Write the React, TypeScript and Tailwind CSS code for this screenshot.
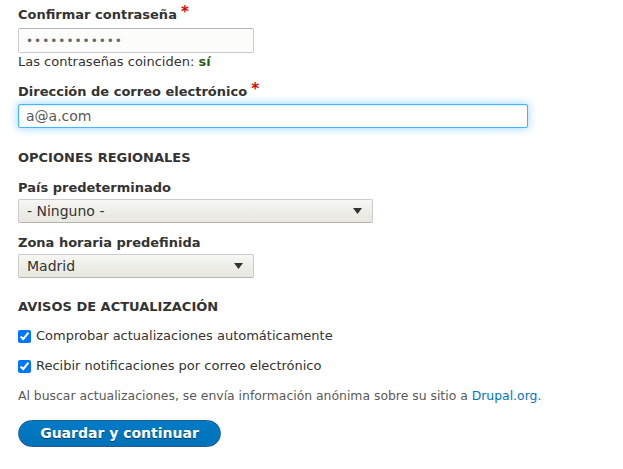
import React from "react";

const Star = () => (
  <span className="ml-[4px] relative top-[-3px] text-[#e00000] font-bold text-[15px]">*</span>
);

const Arrow = () => (
  <svg width="9" height="6" viewBox="0 0 9 6" className="shrink-0">
    <path d="M0 0 H9 L4.5 6 Z" fill="#333" />
  </svg>
);

const Select = ({ value, width }: { value: string; width: string }) => (
  <div
    className={`${width} h-[24px] flex items-center justify-between pl-[8px] pr-[10px] rounded-[2px] border border-[#cccccc] border-b-[#b4b4b4] bg-gradient-to-b from-[#f6f6f3] to-[#e7e7df] text-[14px] text-[#333]`}
  >
    <span>{value}</span>
    <Arrow />
  </div>
);

export default function App() {
  return (
    <div
      className="bg-white w-[623px] h-[469px] overflow-hidden pl-[18px] pt-[5px] text-[#333]"
      style={{ fontFamily: '"DejaVu Sans", Verdana, sans-serif' }}
    >
      <div className="leading-[20px] text-[13px] font-bold text-[#333] flex items-center">
        Confirmar contraseña
        <Star />
      </div>
      <input
        type="password"
        readOnly
        value="123456789012"
        className="mt-[3px] block w-[236px] h-[25px] px-[7px] rounded-[2px] border border-[#cccccc] border-t-[#b4b4b4] bg-[#fcfcfa] text-[12px] tracking-[1px] text-[#666] outline-none"
      />
      <div className="leading-[18px] text-[13px] text-[#333]">
        Las contraseñas coinciden: <span className="font-bold text-[#325e1c]">sí</span>
      </div>

      <div className="mt-[11px] leading-[20px] text-[13px] font-bold text-[#333] flex items-center">
        Dirección de correo electrónico
        <Star />
      </div>
      <div className="mt-[2px] w-[510px] h-[24px] flex items-center px-[7px] rounded-[2px] border border-[#40b6ff] bg-white text-[14px] text-[#595959] shadow-[inset_0_1px_2px_rgba(0,0,0,0.1),0_0_9px_1px_#a6dbff]">
        a@a.com
      </div>

      <div className="mt-[20px] leading-[20px] text-[13px] font-bold uppercase text-[#333]">
        Opciones regionales
      </div>

      <div className="mt-[10px] leading-[20px] text-[13px] font-bold text-[#333]">
        País predeterminado
      </div>
      <div className="mt-[1px]">
        <Select value="- Ninguno -" width="w-[355px]" />
      </div>

      <div className="mt-[10px] leading-[20px] text-[13px] font-bold text-[#333]">
        Zona horaria predefinida
      </div>
      <div className="mt-[1px]">
        <Select value="Madrid" width="w-[236px]" />
      </div>

      <div className="mt-[19px] leading-[20px] text-[13px] font-bold uppercase text-[#333]">
        Avisos de actualización
      </div>

      <label className="mt-[9px] flex items-center leading-[20px] text-[13px] text-[#333]">
        <input type="checkbox" defaultChecked className="m-0 mr-[5px] w-[13px] h-[13px] accent-[#0075ff]" />
        Comprobar actualizaciones automáticamente
      </label>
      <label className="mt-[10px] flex items-center leading-[20px] text-[13px] text-[#333]">
        <input type="checkbox" defaultChecked className="m-0 mr-[5px] w-[13px] h-[13px] accent-[#0075ff]" />
        Recibir notificaciones por correo electrónico
      </label>

      <div className="mt-[10px] leading-[20px] text-[12.4px] text-[#595959]">
        Al buscar actualizaciones, se envía información anónima sobre su sitio a{" "}
        <span className="text-[#0074bd]">Drupal.org</span>.
      </div>

      <button className="mt-[14px] w-[203px] h-[27px] rounded-full border border-[#1e5c90] bg-gradient-to-b from-[#007bc6] to-[#0071b8] text-white font-bold text-[14px] [text-shadow:0_1px_rgba(0,0,0,0.5)] flex items-center justify-center">
        Guardar y continuar
      </button>
    </div>
  );
}
